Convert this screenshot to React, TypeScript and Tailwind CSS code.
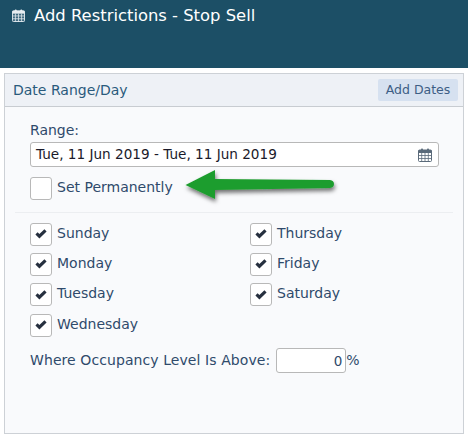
import React from "react";

function Check({ checked = true }: { checked?: boolean }) {
  return (
    <span className="flex h-[23px] w-[22px] shrink-0 items-center justify-center rounded-[3px] border border-[#b8b8b8] bg-white">
      {checked && (
        <svg width="12" height="10" viewBox="0 0 12 10">
          <path d="M0.4 5.4 L2.6 3.2 L4.4 5 L9.4 0.2 L11.6 2.4 L4.4 9.6 Z" fill="#26303f" />
        </svg>
      )}
    </span>
  );
}

function Day({ label }: { label: string }) {
  return (
    <div className="flex h-[23px] items-start gap-[5px]">
      <Check />
      <span className="text-[14px] leading-[20px] text-[#2f4a6b]">{label}</span>
    </div>
  );
}

function CalendarIcon({ color, size, fill }: { color: string; size: number; fill: string }) {
  return (
    <svg width={size} height={size} viewBox="0 0 14 14">
      <rect x="0.5" y="2" width="13" height="11.5" rx="1" fill={fill} stroke={color} />
      <rect x="0.5" y="2" width="13" height="3" fill={color} />
      <rect x="3" y="0.5" width="2" height="3" rx="0.8" fill={color} />
      <rect x="9" y="0.5" width="2" height="3" rx="0.8" fill={color} />
      <path d="M0.5 7.5H13.5M0.5 10.5H13.5M3.7 5V13.5M7 5V13.5M10.3 5V13.5" stroke={color} strokeWidth="0.8" fill="none" />
    </svg>
  );
}

export default function App() {
  return (
    <div className="relative h-[439px] w-[468px] overflow-hidden bg-white font-['DejaVu_Sans',sans-serif]">
      <div className="flex h-[68px] items-start gap-[9px] bg-[#1c4f66] pl-[12px] pt-[6px]">
        <span className="mt-[3px]"><CalendarIcon color="#e8eef2" size={13} fill="#3f6a80" /></span>
        <span className="text-[16.4px] leading-[19px] text-white">Add Restrictions - Stop Sell</span>
      </div>

      <div className="mx-[4px] mt-[5px] h-[361px] border border-[#cdd1d6] bg-[#f9fafc]">
        <div className="flex h-[33px] items-center justify-between border-b border-[#c8ccd1] bg-[#eef1f6] pl-[8px] pr-[5px]">
          <span className="text-[14px] text-[#2a5a7c]">Date Range/Day</span>
          <span className="flex h-[22px] w-[80px] items-center justify-center rounded-[2px] bg-[#d6e1f0] text-[12.5px] text-[#3d5e85]">Add Dates</span>
        </div>

        <div className="px-[25px] pt-[13px]">
          <div className="text-[14px] leading-[20px] text-[#2f4a6b]">Range:</div>
          <div className="mt-[2px] flex h-[25px] w-[409px] items-center justify-between rounded-[3px] border border-[#b8b8b8] bg-white pl-[5px] pr-[6px]">
            <span className="text-[13.6px] text-[#1a1a2a]">Tue, 11 Jun 2019 - Tue, 11 Jun 2019</span>
            <CalendarIcon color="#5a6a7a" size={14} fill="#fff" />
          </div>
          <div className="mt-[10px]">
            <div className="flex h-[23px] items-start gap-[5px]">
              <Check checked={false} />
              <span className="text-[14px] leading-[20px] text-[#2f4a6b]">Set Permanently</span>
            </div>
          </div>
        </div>

        <div className="mx-[10px] mt-[12px] h-px bg-[#eceef1]" />

        <div className="grid grid-cols-[220px_1fr] gap-y-[7.4px] pl-[25px] pt-[9.6px]">
          <Day label="Sunday" />
          <Day label="Thursday" />
          <Day label="Monday" />
          <Day label="Friday" />
          <Day label="Tuesday" />
          <Day label="Saturday" />
          <Day label="Wednesday" />
        </div>

        <div className="mt-[11.7px] flex items-center pl-[25px]">
          <span className="text-[14px] tracking-[0.08px] text-[#2f4a6b]">Where Occupancy Level Is Above:</span>
          <span className="ml-[6px] flex h-[25px] w-[70px] items-center justify-end rounded-[3px] border border-[#b8b8b8] bg-white pr-[3px] text-[13.5px] text-[#2f4a6b]">0</span>
          <span className="text-[14px] text-[#2f4a6b]">%</span>
        </div>
      </div>

      <svg className="absolute left-[180px] top-[165px]" width="165" height="45" viewBox="0 0 165 45">
        <defs>
          <filter id="s" x="-10%" y="-30%" width="120%" height="170%">
            <feDropShadow dx="1" dy="3" stdDeviation="2" floodColor="#000" floodOpacity="0.55" />
          </filter>
        </defs>
        <path
          d="M5.5 20 L35 5 L35 14 L150 15 Q154 15.5 154 19 Q154 22.5 150 23 L35 25 L35 34 Z"
          fill="#1f9d2f"
          filter="url(#s)"
        />
      </svg>
    </div>
  );
}
